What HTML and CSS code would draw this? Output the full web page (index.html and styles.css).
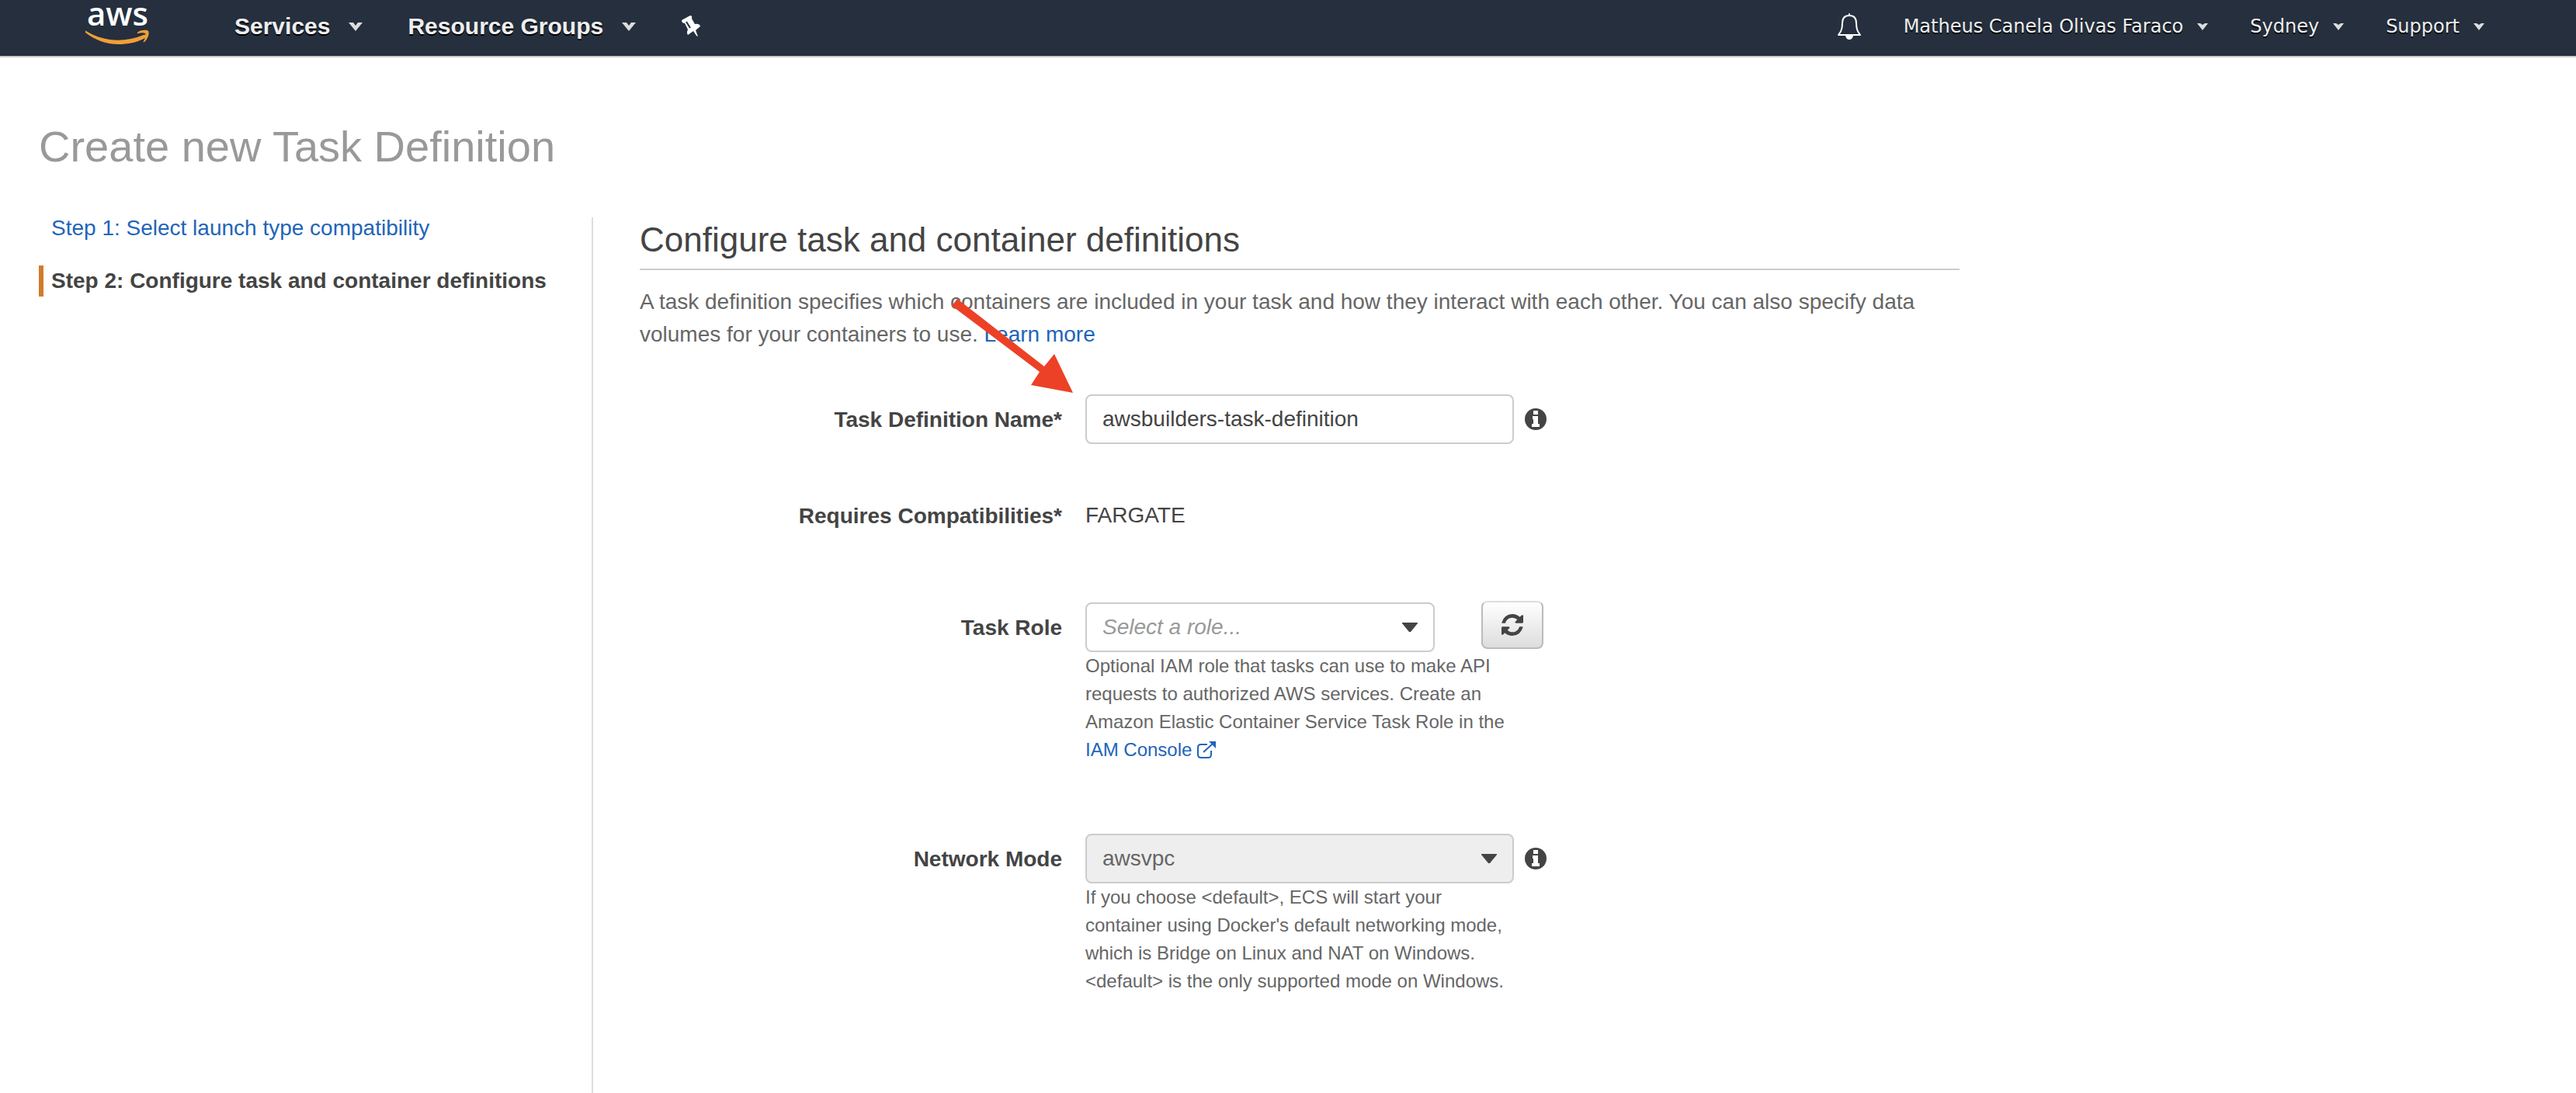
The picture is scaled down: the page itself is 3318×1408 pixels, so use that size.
FILE: index.html
```html
<!DOCTYPE html>
<html lang="en">
<head>
<meta charset="utf-8">
<title>Create new Task Definition</title>
<link rel="stylesheet" href="styles.css">
</head>
<body>
<header class="topbar">
  <nav class="topbar-main" aria-label="Main">
    <a class="brand" href="#" aria-label="Home">
      <svg width="84" height="66" viewBox="0 0 84 66">
        <text class="brand-text" x="2" y="32">aws</text>
        <path fill="#f19e38" d="M1 39 C24 53 50 54 75 44 C78 43 80 46 77 48 C66 54 54 56 43 56 C26 56 12 50 0 41 C-1 39 0 38 1 39Z"/>
        <path fill="#f19e38" d="M67 41 C70 37 80 37 81 39 C83 42 80 50 76 53 C75 54 74 53 75 52 C77 49 78 44 77 42 C75 41 71 41 68 42 C67 42 66 42 67 41Z"/>
      </svg>
    </a>
    <button class="menu menu-strong" type="button">Services
      <svg class="chevron" width="18" height="11" viewBox="0 0 18 11"><path d="M0 0H6L9 4L12 0H18L9 11Z"/></svg></button>
    <button class="menu menu-strong" type="button">Resource Groups
      <svg class="chevron" width="18" height="11" viewBox="0 0 18 11"><path d="M0 0H6L9 4L12 0H18L9 11Z"/></svg></button>
    <button class="icon-button" type="button" aria-label="Pin shortcuts">
      <svg width="26" height="30" viewBox="0 0 26 30"><path fill="#fff" d="M1 7L12 1Q15 1 14 5L18 12Q24 11 25 15L19 20L22 28L20 27L16 21L9 26Q7 23 9 19L5 11Q1 11 1 7Z"/><path d="M7 9L12 17" stroke="#252f3e" stroke-width="2"/></svg>
    </button>
  </nav>
  <nav class="topbar-account" aria-label="Account">
    <button class="icon-button bell" type="button" aria-label="Notifications">
      <svg width="32" height="36" viewBox="0 0 32 36"><path fill="none" stroke="#fff" stroke-width="2" stroke-linejoin="round" stroke-linecap="round" d="M16 2V4M16 4C9 4 7 9 7 14C7 22 5 25 2 29H30C27 25 25 22 25 14C25 9 23 4 16 4Z"/><path fill="#fff" d="M11 30H21Q20 35 16 35T11 30Z"/></svg>
    </button>
    <button class="menu" type="button">Matheus Canela Olivas Faraco
      <svg class="chevron" width="14" height="9" viewBox="0 0 14 9"><path d="M0 0H4L7 2L10 0H14L7 9Z"/></svg></button>
    <button class="menu" type="button">Sydney
      <svg class="chevron" width="14" height="9" viewBox="0 0 14 9"><path d="M0 0H4L7 2L10 0H14L7 9Z"/></svg></button>
    <button class="menu" type="button">Support
      <svg class="chevron" width="14" height="9" viewBox="0 0 14 9"><path d="M0 0H4L7 2L10 0H14L7 9Z"/></svg></button>
  </nav>
</header>

<main class="page">
  <h1 class="page-title">Create new Task Definition</h1>
  <div class="wizard">
    <ol class="steps">
      <li class="step"><a href="#">Step 1: Select launch type compatibility</a></li>
      <li class="step step-current" aria-current="step">Step 2: Configure task and container definitions</li>
    </ol>
    <div class="content">
      <section class="panel">
        <h2 class="panel-title">Configure task and container definitions</h2>
        <p class="intro">A task definition specifies which containers are included in your task and how they interact with each other. You can also specify data volumes for your containers to use. <a href="#">Learn more</a></p>
        <form class="form">
          <div class="row">
            <label class="label" for="name">Task Definition Name*</label>
            <div class="field">
              <div class="control"><input class="box" id="name" type="text" value="awsbuilders-task-definition">
                <svg class="info" width="28" height="28" viewBox="0 0 28 28"><circle cx="14" cy="14" r="14"/><path fill="#fff" d="M11 3H17V8H11ZM10 10H17V20H19V24H9V20H11V14H10Z"/></svg></div>
            </div>
          </div>
          <div class="row row-value">
            <span class="label">Requires Compatibilities*</span>
            <span class="value">FARGATE</span>
          </div>
          <div class="row row-role">
            <label class="label" for="role">Task Role</label>
            <div class="field">
              <div class="control control-role">
                <div class="select"><select class="box placeholder" id="role"><option>Select a role...</option></select>
                  <svg class="arrow" width="20" height="12" viewBox="0 0 20 12"><path d="M0 0H20V1L11 12H9L0 1Z"/></svg></div>
                <button class="refresh" type="button" aria-label="Refresh roles">
                  <svg width="28" height="28" viewBox="0 0 1536 1536"><path d="M1511 928q0 5-1 7-64 268-268 434.500T764 1536q-146 0-282.500-55T238 1324l-129 129q-19 19-45 19t-45-19-19-45V960q0-26 19-45t45-19h448q26 0 45 19t19 45-19 45l-137 137q71 66 161 102t187 36q134 0 250-65t186-179q11-17 53-117 8-23 30-23h192q13 0 22.500 9.500t9.500 22.500zm25-800v448q0 26-19 45t-45 19h-448q-26 0-45-19t-19-45 19-45l138-138Q969 256 768 256q-134 0-250 65T332 500q-11 17-53 117-8 23-30 23H50q-13 0-22.500-9.500T18 608v-7q65-268 270-434.500T768 0q146 0 284 55.500T1297 212l130-129q19-19 45-19t45 19 19 45z"/></svg>
                </button>
              </div>
              <p class="help">Optional IAM role that tasks can use to make API requests to authorized AWS services. Create an Amazon Elastic Container Service Task Role in the <a href="#">IAM Console <svg class="external" width="24" height="22" viewBox="0 0 24 22"><path fill="none" stroke="currentColor" stroke-width="2" d="M13 4H5Q1 4 1 8V17Q1 21 5 21H14Q18 21 18 17V12M8 14L20 3"/><path fill="currentColor" d="M15 0H24V9L21 6L18 3Z"/></svg></a></p>
            </div>
          </div>
          <div class="row row-network">
            <label class="label" for="network">Network Mode</label>
            <div class="field">
              <div class="control">
                <div class="select"><select class="box" id="network" disabled><option>awsvpc</option></select>
                  <svg class="arrow" width="20" height="12" viewBox="0 0 20 12"><path d="M0 0H20V1L11 12H9L0 1Z"/></svg></div>
                <svg class="info" width="28" height="28" viewBox="0 0 28 28"><circle cx="14" cy="14" r="14"/><path fill="#fff" d="M11 3H17V8H11ZM10 10H17V20H19V24H9V20H11V14H10Z"/></svg>
              </div>
              <p class="help">If you choose &lt;default&gt;, ECS will start your container using Docker's default networking mode, which is Bridge on Linux and NAT on Windows. &lt;default&gt; is the only supported mode on Windows.</p>
            </div>
          </div>
        </form>
        <svg class="pointer" width="158" height="122" viewBox="0 0 158 122"><path fill="#ec4126" d="M7 0L119 87L132 71L156 121L102 111L113 94L0 9Z"/></svg>
      </section>
    </div>
  </div>
</main>
</body>
</html>
```
FILE: styles.css
```css
* { box-sizing: border-box; }

body {
  margin: 0;
  min-height: 100vh;
  display: flex;
  flex-direction: column;
  background: #fff;
  color: #444;
  font: 28px/42px "Liberation Sans", Arial, sans-serif;
}

h1, h2, p, ol { margin: 0; padding: 0; font-weight: normal; }
a { color: #2264b8; text-decoration: none; }
button, input, select { font: inherit; color: inherit; }
svg { display: block; flex: none; }

.topbar {
  height: 74px;
  padding: 0 118px 4px 110px;
  display: flex;
  align-items: center;
  justify-content: space-between;
  background: #252f3e;
  border-bottom: 2px solid #ccc;
}
.topbar-main { display: flex; align-items: center; gap: 58px; }
.topbar-account { display: flex; align-items: center; gap: 54px; }
.brand { margin-right: 50px; }
.brand-text { font: 600 42px "Open Sans", sans-serif; fill: #fff; }

.menu, .icon-button { padding: 0; border: 0; background: none; }
.menu {
  display: flex;
  align-items: center;
  gap: 18px;
  color: #eee;
  font: 24px/32px "DejaVu Sans", Verdana, sans-serif;
  text-shadow: 0 2px 0 #000;
}
.menu-strong { gap: 24px; font: bold 30px/34px "Liberation Sans", Arial, sans-serif; }
.chevron { fill: #ddd; }

.page { flex: 1; display: flex; flex-direction: column; padding: 0 50px; }
.page-title { padding: 82px 0 58px; font-size: 56px; line-height: 66px; color: #999; }

.wizard { flex: 1; display: flex; }
.steps { flex: none; width: 712px; list-style: none; }
.step { margin-bottom: 28px; padding-left: 10px; border-left: 6px solid transparent; line-height: 40px; white-space: nowrap; }
.step:first-child { margin-top: -6px; }
.step-current { border-color: #d17a2b; font-weight: bold; }

.content { flex: 1; min-width: 0; padding-left: 60px; border-left: 2px solid #ddd; }
.panel { position: relative; max-width: 1700px; }
.panel-title { height: 68px; border-bottom: 2px solid #ccc; font-size: 44px; line-height: 58px; }
.intro { margin-top: 20px; color: #666; }

.form { padding-top: 56px; }
.row { display: grid; grid-template-columns: 544px 1fr; gap: 30px; }
.label { text-align: right; font-weight: bold; line-height: 66px; }
.value { line-height: 64px; }
.row-value { margin-top: 58px; }
.row-role { margin-top: 78px; }
.row-network { margin-top: 90px; }

.field { max-width: 552px; }
.control { display: flex; align-items: center; gap: 14px; width: 594px; height: 64px; }
.control-role { justify-content: space-between; width: 590px; }
.control-role .select { flex: 0 0 450px; }
.select { position: relative; flex: 0 0 552px; }
.box {
  display: block;
  width: 552px;
  height: 64px;
  padding: 0 20px;
  border: 2px solid #ccc;
  border-radius: 8px;
  background: #fff;
  appearance: none;
}
.select .box { width: 100%; }
.box:disabled { background: #eee; color: #666; opacity: 1; }
.placeholder { color: #999; font-style: italic; }
.arrow { position: absolute; right: 22px; top: 26px; fill: #444; pointer-events: none; }
.info { fill: #444; }

.refresh {
  align-self: flex-start;
  width: 80px;
  height: 62px;
  margin-top: -2px;
  padding: 0;
  display: grid;
  place-items: center;
  border: 2px solid #bbb;
  border-top-color: #ddd;
  border-radius: 8px;
  background: linear-gradient(#fff, #ddd);
  fill: #444;
}

.help { color: #666; font-size: 24px; line-height: 36px; }
.external { display: inline-block; vertical-align: -3px; }

/* Callout arrow laid over the intro text, pointing at the name field */
.pointer { position: absolute; left: 402px; top: 105px; pointer-events: none; }
```
